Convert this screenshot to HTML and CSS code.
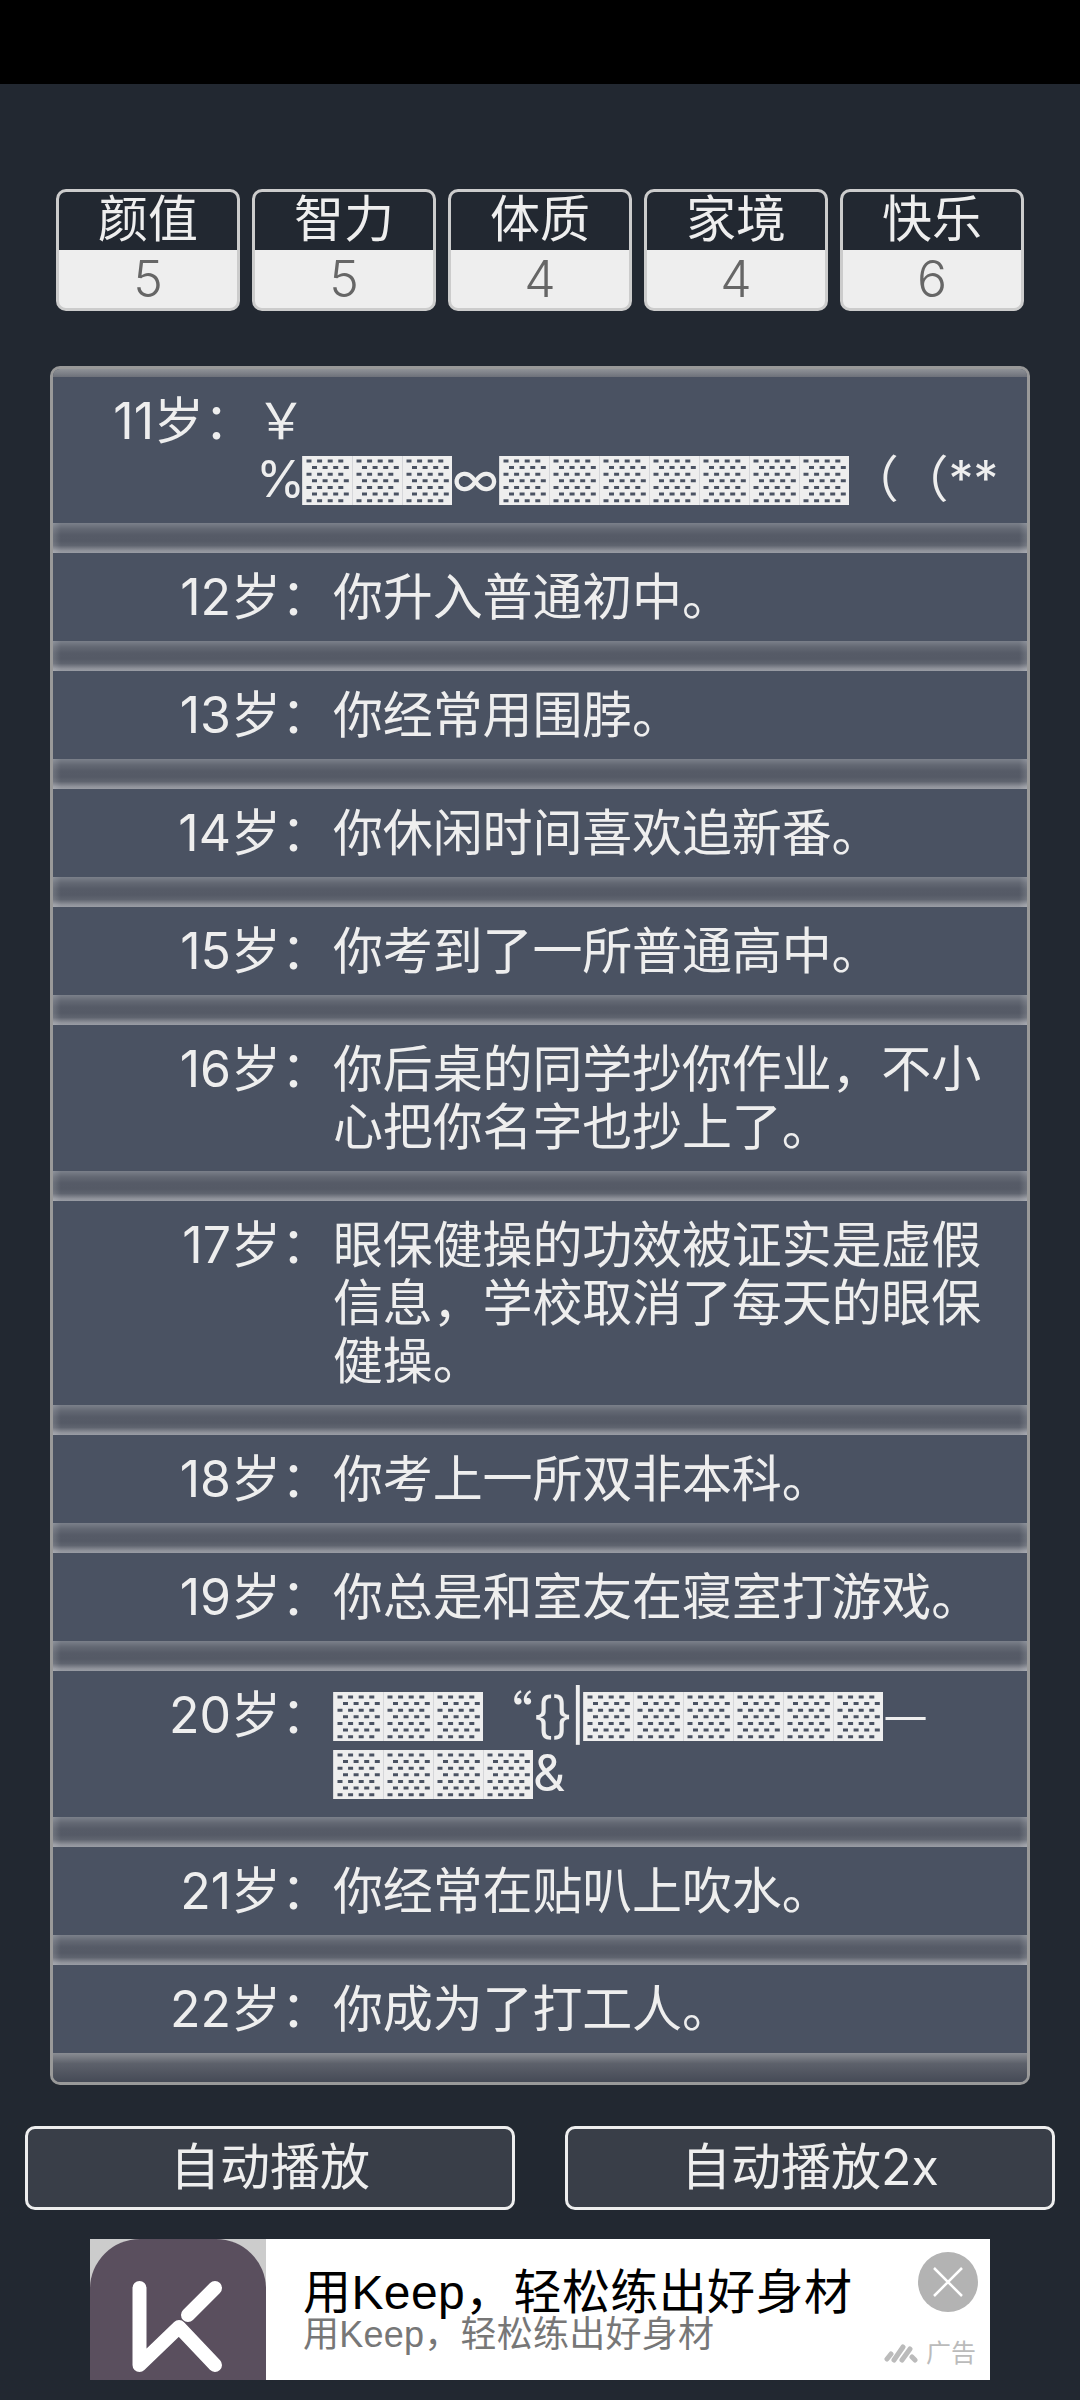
FILE: index.html
```html
<!DOCTYPE html>
<html lang="zh-CN">
<head>
<meta charset="utf-8">
<title>人生重开模拟器</title>
<link rel="stylesheet" href="styles.css">
</head>
<body>
<div class="status-bar"></div>
<main class="page">
  <section class="stats">
    <div class="stat"><div class="stat-name">颜值</div><div class="stat-value">5</div></div>
    <div class="stat"><div class="stat-name">智力</div><div class="stat-value">5</div></div>
    <div class="stat"><div class="stat-name">体质</div><div class="stat-value">4</div></div>
    <div class="stat"><div class="stat-name">家境</div><div class="stat-value">4</div></div>
    <div class="stat"><div class="stat-name">快乐</div><div class="stat-value">6</div></div>
  </section>
  <ul class="log">
    <li class="entry entry-wide"><span class="age">11岁：</span><span class="text"><span class="cjk">￥</span><br><span class="narrow">%</span><span class="shade">▓▓▓</span>∞<span class="shade">▓▓▓▓▓▓▓</span><span class="cjk">（（</span>**</span></li>
    <li class="entry"><span class="age">12岁：</span><span class="text">你升入普通初中。</span></li>
    <li class="entry"><span class="age">13岁：</span><span class="text">你经常用围脖。</span></li>
    <li class="entry"><span class="age">14岁：</span><span class="text">你休闲时间喜欢追新番。</span></li>
    <li class="entry"><span class="age">15岁：</span><span class="text">你考到了一所普通高中。</span></li>
    <li class="entry"><span class="age">16岁：</span><span class="text">你后桌的同学抄你作业，不小<br>心把你名字也抄上了。</span></li>
    <li class="entry"><span class="age">17岁：</span><span class="text">眼保健操的功效被证实是虚假<br>信息，学校取消了每天的眼保<br>健操。</span></li>
    <li class="entry"><span class="age">18岁：</span><span class="text">你考上一所双非本科。</span></li>
    <li class="entry"><span class="age">19岁：</span><span class="text">你总是和室友在寝室打游戏。</span></li>
    <li class="entry"><span class="age">20岁：</span><span class="text"><span class="shade">▓▓▓</span><span class="cjk">“</span><span class="narrow">{}|</span><span class="shade">▓▓▓▓▓▓</span><span class="cjk">—</span><br><span class="shade">▓▓▓▓</span>&amp;</span></li>
    <li class="entry"><span class="age">21岁：</span><span class="text">你经常在贴叭上吹水。</span></li>
    <li class="entry"><span class="age">22岁：</span><span class="text">你成为了打工人。</span></li>
  </ul>
  <div class="controls">
    <button class="btn">自动播放</button>
    <button class="btn">自动播放2x</button>
  </div>
  <aside class="ad">
    <div class="ad-icon">
      <svg viewBox="0 0 176 141" width="176" height="141">
        <path class="k" d="M49.5 49V126L89 88L125 126"/>
        <path class="k" d="M125 49L98 76"/>
      </svg>
    </div>
    <div class="ad-copy">
      <div class="ad-title">用Keep，轻松练出好身材</div>
      <div class="ad-sub">用Keep，轻松练出好身材</div>
    </div>
    <div class="ad-close">
      <svg viewBox="0 0 60 60" width="60" height="60">
        <circle cx="30" cy="30" r="30" fill="#b3b3b3"/>
        <path d="M16 16L44 44M44 16L16 44" stroke="#fff" stroke-width="2.5" fill="none"/>
      </svg>
    </div>
    <div class="ad-mark">
      <svg viewBox="0 0 36 20" width="36" height="20">
        <path class="mark" d="M4 16L8 11M11 17L20 4M19 17L27 6M29 14L32 17"/>
      </svg>
      <span>广告</span>
    </div>
  </aside>
</main>
</body>
</html>
```

FILE: styles.css
```css
* { box-sizing: border-box; }
html, body { margin: 0; padding: 0; }
body {
  width: 1080px;
  height: 2400px;
  background: #222831;
  color: #eeeeee;
  font-family: Inter, "Noto Sans CJK SC", sans-serif;
  font-weight: 400;
  text-spacing-trim: space-all;
  overflow: hidden;
}
.status-bar { height: 84px; background: #000; }
.page { display: flex; flex-direction: column; }

.stats {
  display: flex;
  gap: 12px;
  padding: 105px 56px 0;
}
.stat {
  width: 184px;
  height: 122px;
  border: 3px solid #cccccc;
  border-radius: 10px;
  overflow: hidden;
  background: #eeeeee;
  text-align: center;
}
.stat-name {
  height: 58px;
  line-height: 55px;
  font-size: 50px;
  background: #222831;
  color: #eeeeee;
}
.stat-value {
  height: 58px;
  line-height: 58px;
  font-size: 50px;
  font-weight: 300;
  color: #666666;
}

.log {
  list-style: none;
  margin: 55px 0 0 50px;
  padding: 0;
  width: 980px;
  height: 1719px;
  border: 3px solid #999999;
  border-radius: 10px;
  background: #4a5262;
  overflow: hidden;
}
.log::before {
  content: "";
  display: block;
  height: 8px;
  background: linear-gradient(to bottom, #8f9297 0, #6d717a 100%);
}
.entry {
  display: flex;
  padding: 15px 0;
  font-size: 50px;
  line-height: 58px;
  margin-bottom: 30px;
  position: relative;
}
.entry::after {
  content: "";
  position: absolute;
  left: 0;
  right: 0;
  bottom: -30px;
  height: 30px;
  background:
    linear-gradient(to right, rgba(255, 255, 255, 0.14), rgba(255, 255, 255, 0) 8px, rgba(255, 255, 255, 0) calc(100% - 8px), rgba(255, 255, 255, 0.14)),
    linear-gradient(to bottom, #7b808a 0, #636873 20%, #565b67 40%, #555a66 60%, #5f646f 75%, #8f929a 92%, #9a9da5 100%);
}
.entry:last-child::after {
  background: linear-gradient(to bottom, #8a8d93 0, #5d616b 35%, #444955 100%);
}
.age {
  flex: none;
  width: 280px;
  padding-right: 2px;
  text-align: right;
  white-space: nowrap;
}
.entry-wide .age { width: 203px; }
.text { white-space: nowrap; letter-spacing: -0.15px; }
.cjk { font-family: "Noto Sans CJK SC", sans-serif; line-height: 0; }
.narrow { letter-spacing: -3px; }
.shade {
  display: inline-block;
  height: 49px;
  line-height: 49px;
  margin-top: 6px;
  vertical-align: top;
  letter-spacing: 0;
  color: transparent;
  font-family: "Noto Sans CJK SC", sans-serif;
  background: #eeeeee url("data:image/svg+xml,%3Csvg xmlns='http://www.w3.org/2000/svg' width='50' height='49'%3E%3Cpath d='M.5 0v49' stroke='%23d6d7da'/%3E%3Cg fill='%234a5262'%3E%3Cpath id='a' d='M4.5 3.4h5v3h-5zm10.6 0h5v3h-5zm10.6 0h5v3h-5zm10.6 0h5v3h-5z'/%3E%3Cpath id='b' d='M10 10h5v3h-5zm10.6 0h5v3h-5zm10.6 0h5v3h-5zm10.6 0h5v3h-5z'/%3E%3Cuse href='%23a' y='13.3'/%3E%3Cuse href='%23b' y='13.3'/%3E%3Cuse href='%23a' y='26.6'/%3E%3Cuse href='%23b' y='26.6'/%3E%3Cuse href='%23a' y='39.9'/%3E%3C/g%3E%3C/svg%3E") 0 0 / 50px 49px repeat-x;
}

.controls {
  display: flex;
  gap: 50px;
  padding: 41px 0 0 25px;
}
.btn {
  width: 490px;
  height: 84px;
  border: 3px solid #eeeeee;
  border-radius: 10px;
  background: #393e48;
  color: #eeeeee;
  font: inherit;
  font-size: 50px;
  line-height: 58px;
  padding: 0 0 2px;
}

.ad {
  position: relative;
  display: flex;
  width: 900px;
  height: 141px;
  margin: 29px 0 0 90px;
  background: #fff;
}
.ad-icon { width: 176px; height: 141px; background: #cccccc; flex: none; }
.ad-icon svg { display: block; background: #5a4f5e; border-radius: 50px 50px 0 0; }
.k { fill: none; stroke: #fff; stroke-width: 14; stroke-linecap: round; stroke-linejoin: round; }
.ad-copy {
  padding: 31px 0 0 37px;
  font-family: "Liberation Sans", "Noto Sans CJK SC", sans-serif;
  font-weight: 400;
  white-space: nowrap;
}
.ad-title { font-size: 48px; line-height: 46px; letter-spacing: 0.4px; color: #000; }
.ad-sub { font-size: 36px; line-height: 36px; letter-spacing: 0.25px; color: #777; margin-top: 1px; }
.ad-close { position: absolute; top: 13px; left: 828px; line-height: 0; }
.ad-mark {
  position: absolute;
  left: 793px;
  top: 99px;
  display: flex;
  align-items: center;
  gap: 7px;
  font-size: 25px;
  line-height: 30px;
  color: #bbbbbb;
  font-weight: 400;
}
.mark { fill: none; stroke: #bbbbbb; stroke-width: 5; stroke-linecap: round; }
```
